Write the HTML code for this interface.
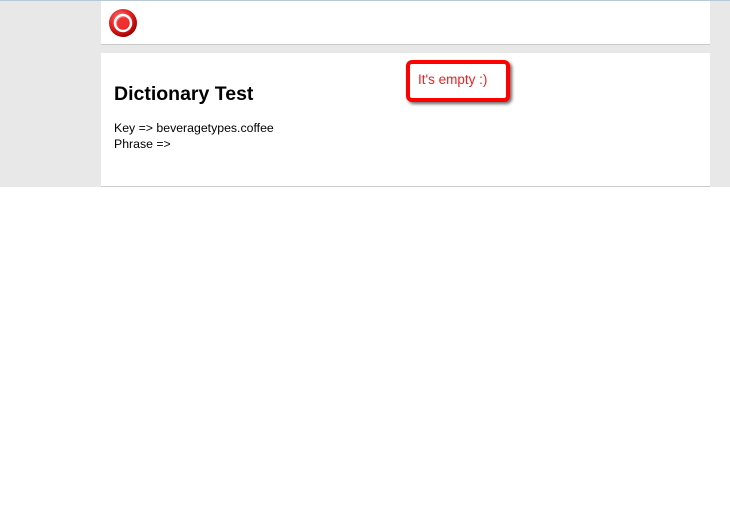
<!DOCTYPE html>
<html><head><style>
body{margin:0;width:730px;height:523px;background:#fff;font-family:"Liberation Sans",sans-serif;position:relative;overflow:hidden}
.bg{position:absolute;left:0;top:0;width:730px;height:187px;background:#e8e8e8;border-top:1px solid #b8c8d8;box-sizing:border-box}
.p1{position:absolute;left:101px;top:1px;width:609px;height:43px;background:#fff;border-bottom:1px solid #ccc}
.p2{position:absolute;left:101px;top:53px;width:609px;height:134px;background:#fff;border-bottom:1px solid #ccc;box-sizing:border-box}
h1{position:absolute;left:13px;top:30px;margin:0;font-size:19.5px;font-weight:bold;color:#000}
.t{position:absolute;left:13px;top:67px;font-size:12.3px;line-height:16px;color:#000}
.c{position:absolute;left:406px;top:60px;width:96px;height:34px;border:4px solid #f00;border-radius:6px;background:#fff;box-shadow:2px 2px 3px rgba(0,0,0,.6);box-sizing:content-box;color:#f02020;font-size:13.5px}
.c span{position:absolute;left:8px;top:8px}
</style></head><body>
<div class="bg"></div>
<div class="p1">
<svg style="position:absolute;left:7px;top:7px" width="30" height="30" viewBox="0 0 30 30">
<defs><radialGradient id="g" cx="40%" cy="35%" r="65%"><stop offset="0" stop-color="#ff8080"/><stop offset="0.6" stop-color="#e82020"/><stop offset="1" stop-color="#a00000"/></radialGradient></defs>
<circle cx="15" cy="15" r="14" fill="url(#g)"/>
<circle cx="15" cy="15" r="8" fill="none" stroke="#fff" stroke-width="2.5"/>
<circle cx="15" cy="15" r="5.5" fill="#f03030"/>
</svg>
</div>
<div class="p2">
<h1>Dictionary Test</h1>
<div class="t">Key =&gt; beveragetypes.coffee<br>Phrase =&gt;</div>
</div>
<div class="c"><span>It's empty :)</span></div>
</body></html>
